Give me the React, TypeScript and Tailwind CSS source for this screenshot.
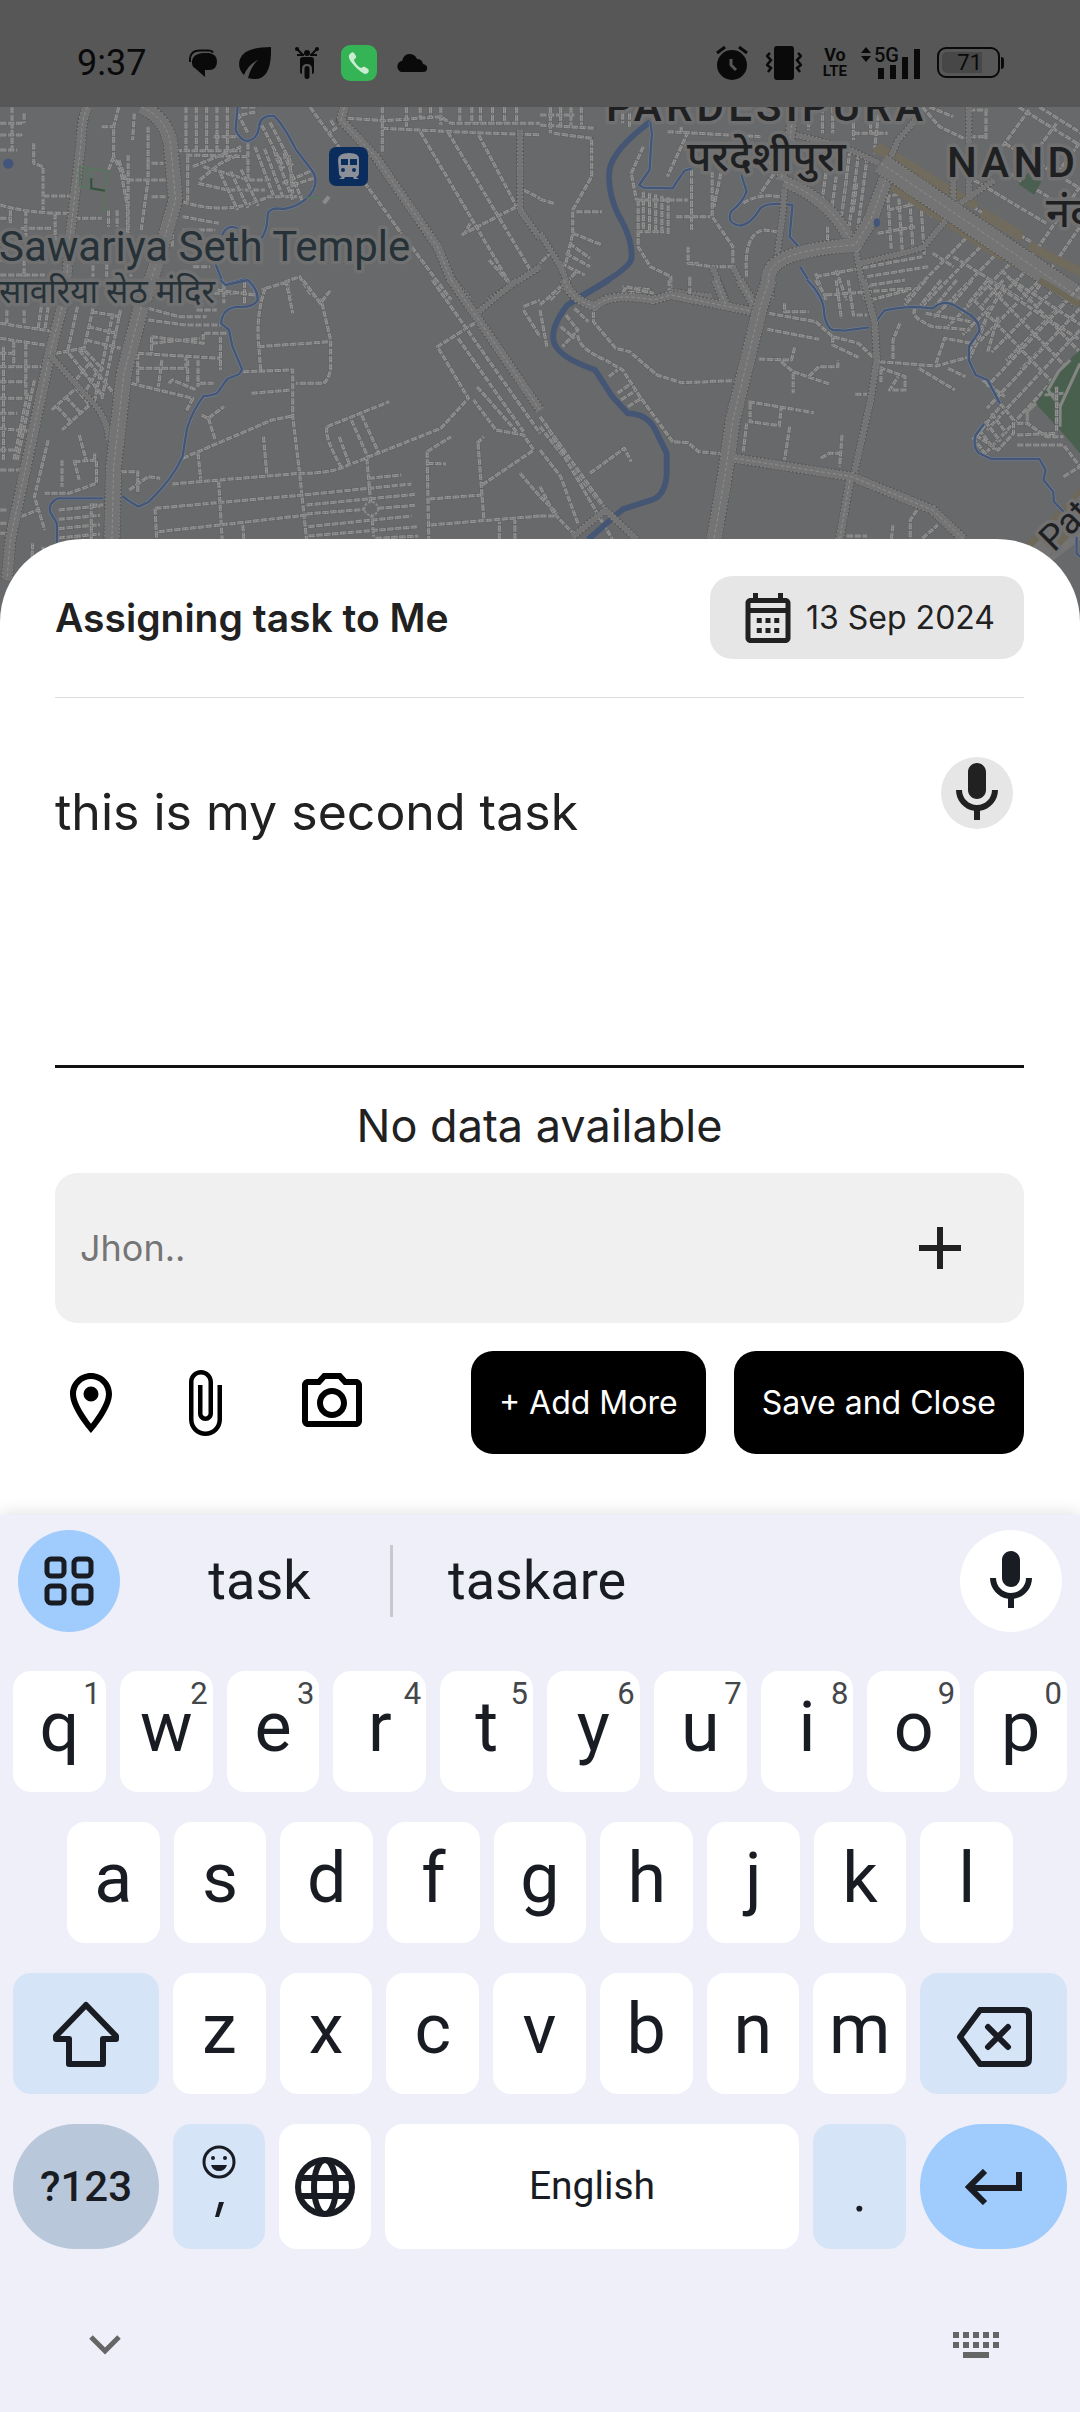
import React from "react";

/* ---------- map drawing ---------- */

/** n parallel streets starting at (x, y), each (dx, dy) long and stepped by (sx, sy). */
function rows(x: number, y: number, dx: number, dy: number, n: number, sx: number, sy: number) {
  let d = "";
  for (let i = 0; i < n; i++) d += `M${x + sx * i} ${y + sy * i}l${dx} ${dy}`;
  return d;
}

function Street({ d }: { d: string }) {
  return (
    <g fill="none" strokeLinejoin="round">
      <path d={d} stroke="#5f6062" strokeWidth={12} />
      <path d={d} stroke="#949494" strokeWidth={9} strokeDasharray="19 4" />
      <path d={d} stroke="#717171" strokeWidth={3} strokeDasharray="5 3" />
    </g>
  );
}

function Road({ d, w }: { d: string; w: number }) {
  return (
    <g fill="none" strokeLinejoin="round">
      <path d={d} stroke="#545556" strokeWidth={w + 7} strokeDasharray="8 4" />
      <path d={d} stroke="#8c8c8c" strokeWidth={w + 3} strokeDasharray="6 5" />
      <path d={d} stroke="#747474" strokeWidth={w - 1} />
      {w > 17 && <path d={d} stroke="#9a9a9a" strokeWidth={2} strokeDasharray="10 7" />}
    </g>
  );
}

function Stream({ d, w = 7 }: { d: string; w?: number }) {
  return (
    <g fill="none" strokeLinejoin="round">
      {w < 10 && <path d={d} stroke="#74849d" strokeWidth={w + 3} />}
      <path d={d} stroke="#455674" strokeWidth={w} />
    </g>
  );
}

function MapLabel({ x, y, size, children, color = "#1e2022", className = "", rotate = 0 }: {
  x: number; y: number; size: number; children: string; color?: string; className?: string; rotate?: number;
}) {
  return (
    <text
      x={x}
      y={y}
      fontSize={size}
      fill={color}
      stroke="#717171"
      strokeWidth={7}
      strokeLinejoin="round"
      paintOrder="stroke"
      transform={rotate ? `rotate(${rotate} ${x} ${y})` : undefined}
      className={`font-[Roboto,'Noto_Sans',sans-serif] ${className}`}
    >
      {children}
    </text>
  );
}

function CityMap() {
  return (
    <svg viewBox="0 107 1080 515" preserveAspectRatio="xMidYMin slice" className="h-full w-full bg-[#68696b]" role="img" aria-label="Map">
      {/* north-west */}
      <g transform="scale(.3444 .3333)">
        <Street d={"M0 370H70M0 405H70M0 450H50M35 321V450M70 340V370M98 430V490L125 500V630M125 588H215M0 615Q80 640 200 640M75 630V710M0 655H35M30 630V670M160 640V740M60 685H150M215 655H295M0 780H60M70 780V830M0 825H130M345 321L330 380V470L350 510L370 620V740M295 380H335M390 340L385 420M430 380V490M372 465V700M330 470L315 510M345 480L365 540M370 540H490M440 490H475M440 590H480M430 490V540L410 690M315 630V680M340 630V680"} />
        <Street d={rows(540, 321, 0, 130, 5, 30, 0) + "M510 452H700M540 465L720 470M545 470V610M620 410H690V400M560 500L700 440M720 430V540M580 540L640 490L690 465M530 605Q660 650 780 590H880M575 550L660 570H770M590 500L720 540H790M530 650L635 670M530 690H625M500 740V700"} />
        <Street d={rows(760, 375, 65, 130, 2, 24, -8) + rows(740, 440, 55, 150, 4, 28, 6) + rows(640, 520, 50, 110, 3, 30, -6) + "M690 340L720 400M700 321L745 321M700 345L745 335M800 480L840 470L850 580M820 550L910 510M850 555L910 535"} />
        <Street d="M900 321L1165 700M1195 740L1310 900M1010 355L1120 362L1280 350L1310 370H1568M1110 321V460M960 360L975 385L955 400M1180 321V380M1220 321V355M1250 321V355M1280 321V375M1335 321V370M1370 321V370M1395 321V370M1430 321V370M1465 321V370M1500 321V370M1110 385L1380 398L1568 404" />
        <Street d="M1220 395L1480 850M1300 395L1540 810M1390 405L1500 620M1340 705L1500 620M1365 670L1350 700M1520 570L1568 595M1420 780L1480 850M760 870L870 830L900 880L930 900M835 850L845 900M960 870L940 900M620 880H740M270 795V830M310 790V830M560 800H610M380 800V830" />
        <Road w={24} d="M255 321Q238 345 235 430L200 740L190 900" />
        <Road w={38} d="M410 321Q480 350 495 430L510 600L470 740L420 900" />
        <Road w={22} d="M1000 321L990 360L1090 470L1270 740L1310 840L1360 900" />
        <Road w={15} d="M1510 390V630L1568 715" />
        <Road w={15} d="M1568 800L1420 900" />
        <Stream d="M690 321L684 390Q700 425 720 423Q750 415 752 380Q755 345 795 348Q820 370 860 450L905 510Q930 545 900 585Q870 620 825 627Q775 620 777 650Q775 700 755 720M645 705Q660 670 690 685M625 790L650 855L710 838Q745 860 748 900" />
        <path d="M232 500L313 514L303 572L232 560ZM303 572V630H318M250 505V565M265 505V565M890 593H935" fill="none" stroke="#587560" strokeWidth={5} />
        <path d="M265 535V565L305 572" fill="none" stroke="#34513c" strokeWidth={6} />
        <path d="M955 590L940 610" stroke="#8b8b8b" strokeWidth={12} />
        <ellipse cx={24} cy={491} rx={15} ry={15} fill="#43557a" />
      </g>

      {/* north-east */}
      <g transform="translate(540) scale(.3444 .3333)">
        <Street d={rows(60, 321, 0, 55, 3, 30, 0) + "M0 345H100M0 375L160 385M40 400L150 415V530L95 630V700L75 790M0 598L40 610M105 635H180M95 700L180 735M85 730L145 775M75 760L145 800M60 790L130 825M35 755L0 790M30 900L110 810M200 340V370M240 340V370M260 340V380M30 321V400"} />
        <Street d={"M370 395L640 410M430 395L370 530M410 380V400M300 440L265 520L280 600M440 510V690M280 600H430M280 695H360M395 650H495M500 515V650L560 740V790M525 520L505 620M285 600V740L320 800L380 830V880M430 740V790H460M430 790L500 800H570M435 830V880M210 885L320 870L240 860" + rows(300, 575, 0, 115, 5, 18, 4)} />
        <Street d={"M620 500L700 480M590 610Q630 580 700 590M680 520L640 580M600 830Q590 700 650 690L690 695M835 680V730M820 321V400M780 340V390M850 321V400M910 321V420M960 321V400M910 400H1010M985 321L970 460" + rows(830, 520, -12, 90, 4, 30, 10) + rows(900, 450, -30, 240, 3, 25, 10)} />
        <Street d={rows(1010, 590, 10, 160, 4, 32, 6) + "M1010 630L1100 610M980 700L1090 680M1000 590L1060 580L1140 650M800 830L1110 770M800 820L830 900M860 810L890 900M950 830L1130 800M950 860L1060 840M1110 321L1160 380L1240 420M1130 321L1200 350M1290 410H1250M1295 330V420M1245 330H1300"} />
        <Street d={rows(1390, 321, 178, 115, 2, 60, 0) + rows(1350, 430, 210, 130, 4, -45, 55) + rows(1420, 330, -85, 120, 3, 80, 40) + rows(1568, 560, -160, 240, 2, 0, 120) + rows(1270, 680, -210, 220, 9, 42, 26) + "M1200 770L1400 900M1140 760L1200 800"} />
        <path d="M960 450L990 430L1050 465L1275 610L1260 630ZM1290 625L1405 695L1395 725L1275 650ZM1425 725L1568 800V830L1415 750ZM1020 545L1350 765L1340 785L1015 570Z" fill="#716b5d" />
        <path d="M1360 785L1568 900" stroke="#716b5d" strokeWidth={14} />
        <path d="M1418 518L1456 545L1434 584L1390 553Z" fill="#4a5f50" />
        <Stream w={17} d="M320 365Q210 450 202 510Q195 570 225 640Q272 720 265 780Q255 810 120 888" />
        <Stream d="M320 365L325 400L318 510L288 555L300 563L385 565Q400 540 420 512L440 506M585 525L600 575Q590 605 555 635Q540 670 580 677Q610 675 640 625Q660 605 733 615L725 710L755 745M755 800L815 900" />
        <Road w={26} d="M735 340L725 420L700 540" />
        <Road w={14} d="M710 560L705 640L688 770" />
        <Road w={14} d="M745 405L880 440L985 490M1090 360L1040 420L1015 480M1245 321V600M1200 540V600M915 740L945 900M930 790L1110 745L1220 610L1320 540M380 875L500 890M500 800L540 900M560 800L610 900M0 700L60 800L100 900" />
        <Road w={32} d="M710 545Q850 600 910 740" />
        <Road w={38} d="M1010 520L960 660L915 735Q700 750 670 810Q655 840 660 900" />
        <Road w={58} d="M990 490L1568 895" />
        <ellipse cx={978} cy={668} rx={9} ry={13} fill="#43557a" />
      </g>

      {/* south-west */}
      <g transform="translate(0 280) scale(.3444 .3333)">
        <Street d={"M0 130L160 155M0 175L130 195M0 220H40M0 260H120M0 305H75M0 355H70M0 400H50M0 445L90 455M0 510H40M0 570H70M20 90V130M70 90V130M40 185V260M75 190V350M10 200V540M0 690H20M0 760H25M0 730H30M120 80L110 150M140 80L130 150M100 300L50 540M80 340L40 540M140 480L100 650L130 750M60 710L110 690M90 900L95 790M120 900L125 800"} />
        <Street d={rows(225, 80, -30, 140, 2, 45, 5) + rows(350, 90, -55, 270, 2, -22, 10) + "M265 95L350 110M255 140L340 160M250 180L350 205M160 220L240 205L300 270M230 210L330 340M200 220L300 350M220 300L260 250M250 330L285 270M150 390L220 325L260 375L180 450M165 380L210 430M190 350L235 400"} />
        <Street d={"M430 85L520 110H600M430 120L540 135H640M400 220L640 235M440 170L590 190V160H660M440 170V220M400 265H540V230M380 310L560 355L540 395M490 310L500 300L570 330M575 240V320M545 240V310M580 310H620M640 170V270M470 240L460 320M400 220V310M630 30L740 45M570 90H630M440 190L580 175M650 10V70M710 5V70"} />
        <Street d="M770 25L840 5M770 25Q745 100 750 180L757 270M750 200L960 185M830 0L850 100M880 0L930 70L960 30M935 70L960 180V270Q950 310 935 310H860M705 275L850 270V410L870 580L890 778M730 340L845 330M530 535L790 420L850 408M585 405L605 415L650 380M605 415L625 480M575 520L583 600M765 470L775 585" />
        <Street d="M500 612L870 580Q960 580 1000 560L1280 445L1360 355L1270 200L1385 125M950 440L1130 365M950 440Q940 470 990 560M985 470L1015 555M1020 420L1070 535M1050 405L1098 515M1065 535L1085 770M1070 595L1165 585M450 685L880 645L1195 612M450 685L455 778M890 675L1205 643M890 702L1205 676M460 755L640 735L890 705M895 740L1195 708M895 768L1215 740M635 605L645 778M705 735L708 778M1090 775L1215 768" />
        <Street d={"M1240 515L1310 470M1240 515L1245 778M1240 550L1295 552M1385 490L1405 470M1388 490L1405 720M1400 615L1550 510L1520 465L1440 450L1375 360M1245 657L1400 645M1250 735L1568 708M1510 580L1568 650M1450 778V725M1495 778V720M1330 175L1520 455M1385 320L1500 455M1520 80L1568 60M1520 90L1568 170M1255 0L1568 460M350 575H400V640M375 630L430 590L465 595M230 465L250 540M215 545L280 540V610L200 640H130M180 540V620M215 540L230 600M275 520V540" + rows(170, 690, 120, -12, 4, 0, 28) + "M265 670V778M265 675H300"} />
        <circle cx={1078} cy={686} r={20} fill="#68696b" stroke="#8b8b8b" strokeWidth={6} strokeDasharray="8 4" />
        <Road w={28} d="M180 80L145 220L75 560L30 778L20 900" />
        <Road w={14} d="M145 225L280 380Q315 430 315 480" />
        <Road w={42} d="M410 80L360 280L330 560L325 778" />
        <Road w={22} d="M1310 0L1390 120L1568 390" />
        <Road w={14} d="M1390 95L1500 0" />
        <Stream d="M640 0L655 15L720 0Q750 30 748 60Q735 85 690 80Q645 85 642 130L665 150L675 200L703 268L695 282L660 297L630 340Q610 350 592 347Q560 390 543 445L530 530Q500 600 430 667L402 680L370 660L355 648M300 655H168Q140 670 145 695L165 730V790" />
      </g>

      {/* south-east */}
      <g transform="translate(540 280) scale(.3444 .3333)">
        <Street d={"M0 75L60 20M0 90L20 200M75 105L110 150L65 200M60 140L100 175M100 85L140 125M155 95V125L220 205L260 215L340 285L410 308L565 302M110 165Q110 205 190 240L240 270L290 350L385 485L430 488L460 515L540 522M200 290L225 270M225 340L265 310M235 360L280 330M255 380L295 355M145 580L245 505L265 545M0 510L60 590L110 730M0 620L40 700L100 765M0 708H50M0 650L50 700M240 40L250 20L330 40M375 0V35M435 0V45M0 440L190 690"} />
        <Street d="M0 410L200 700M15 430L210 778M665 100L800 125M710 70V95H780M660 148L810 178M635 237L730 240L740 200M700 245L735 275L840 312M780 290L810 260H865V240M735 280V340M605 365L795 398M610 370V425L695 437L700 385M600 430L590 515M725 440L710 540M877 465L870 560M815 535L840 520H870M915 343H950M800 125L850 170L925 190L970 235M850 170V195L925 232" />
        <Street d={"M1045 130L1025 180V240M985 245L1150 258L1250 230L1330 40M985 262L1060 290V330H1015L1040 290M1100 265L1205 330M1185 265L1235 290M1150 250L1175 175L1255 190M1090 85Q1070 110 1140 140L1250 150M1120 100L1250 125M990 265V310M800 0L830 50M860 0L875 115M895 0L910 105H950M830 45L1080 25M960 60L1070 30M960 15L1060 0"} />
        <Street d={rows(1120, 0, -60, 75, 6, 45, 0) + rows(1260, 60, 240, 260, 3, 40, -45) + rows(1568, 20, -270, 300, 4, 0, 65) + rows(1300, 0, 268, 180, 2, 70, 0) + "M1245 215L1350 10M1300 215L1330 110M1285 300L1350 350"} />
        <path d="M1568 210L1500 275L1440 372L1510 450L1568 520Z" fill="#49604f" />
        <path d="M1568 250L1510 380V440M1465 345L1520 340M1415 430V395L1440 370M1540 240L1505 275L1475 330L1510 380" fill="none" stroke="#858683" strokeWidth={9} />
        <Street d={rows(1310, 400, 45, 60, 4, -18, 24) + "M1265 470L1340 375L1375 420V460L1330 510L1265 465M1385 430H1415L1470 470H1520M1385 465L1500 460M1385 495H1520L1568 560M1520 590L1568 560M1500 320V460M1025 735L1020 778M1095 690L1075 720V778M1110 775L1155 735M890 768H950"} />
        <path d="M1420 800L1568 640L1568 780L1480 850Z" fill="#747474" />
        <path d="M1410 790L1568 625L1568 655L1430 800ZM1530 720L1568 690V740L1480 830Z" fill="#6e6859" />
        <path d="M1450 0L1568 75" stroke="#6e6859" strokeWidth={18} />
        <Stream w={17} d="M200 0L80 75Q30 140 40 185Q50 230 160 270L210 350L255 400Q310 400 335 450L368 520V580Q365 640 330 658L240 688L140 778" />
        <Stream d="M775 0Q825 50 825 100Q830 140 850 150L885 152L955 142M975 125L1000 92Q1060 75 1140 85Q1175 55 1210 80L1250 105Q1280 130 1275 155L1245 200V240L1265 285L1300 300L1335 370M1290 430L1265 465Q1255 500 1275 520L1310 537H1450L1468 570L1462 600L1490 635L1492 665L1520 695M1558 770V820L1568 830" />
        <Road w={22} d="M70 0Q90 60 160 80Q200 35 330 60L380 45L620 95M510 0L540 75M580 0L625 80" />
        <Road w={40} d="M665 0L640 80L560 420L535 600L505 778" />
        <Road w={16} d="M940 0L972 130L978 240L960 360L910 590" />
        <Road w={24} d="M565 535L905 590L1140 690L1230 778" />
        <Road w={20} d="M900 600L870 778" />
        <Road w={16} d="M95 770L190 690L280 778" />
      </g>

      <MapLabel x={-1} y={261} size={42} color="#263238">Sawariya Seth Temple</MapLabel>
      <MapLabel x={-1} y={303} size={33} color="#263238">सावरिया सेठ मंदिर</MapLabel>
      <MapLabel x={606} y={121} size={42} className="font-medium tracking-widest">PARDESIPURA</MapLabel>
      <MapLabel x={687} y={171} size={42} className="font-medium">परदेशीपुरा</MapLabel>
      <MapLabel x={947} y={177} size={42} className="font-medium tracking-widest">NAND</MapLabel>
      <MapLabel x={1046} y={227} size={42} className="font-medium">नंद</MapLabel>
      <MapLabel x={1054} y={553} size={36} rotate={-45}>Patn</MapLabel>

      <rect x={329} y={147} width={39} height={39} rx={7} fill="#0b2d5e" />
      <g fill="#8a8f98">
        <path d="M338 160q0-7 11-7t10 7v13q0 3-3 4l3 2h-5l-1-2h-8l-1 2h-5l3-2q-3-1-3-4z" />
        <path d="M341 159h7v6h-7zM350 159h7v6h-7z" fill="#0b2d5e" />
        <circle cx={343} cy={170} r={2} fill="#0b2d5e" />
        <circle cx={354} cy={170} r={2} fill="#0b2d5e" />
      </g>
    </svg>
  );
}

/* ---------- icons ---------- */

function Icon({ d, className }: { d: string; className: string }) {
  return (
    <svg viewBox="0 0 24 24" fill="currentColor" className={className} aria-hidden="true">
      <path d={d} />
    </svg>
  );
}

const MIC = "M12 14c1.66 0 3-1.34 3-3V5c0-1.66-1.34-3-3-3S9 3.340 9 5v6c0 1.660 1.340 3 3 3zm5-3c0 2.760-2.240 5-5 5s-5-2.240-5-5H5c0 3.530 2.610 6.430 6 6.920V21h2v-3.080c3.390-.49 6-3.390 6-6.920h-2z";
const PLUS = "M19 13h-6v6h-2v-6H5v-2h6V5h2v6h6v2z";
const PIN = "M12 2C8.130 2 5 5.130 5 9c0 5.250 7 13 7 13s7-7.750 7-13c0-3.870-3.130-7-7-7zM7 9c0-2.760 2.240-5 5-5s5 2.240 5 5c0 2.880-2.880 7.190-5 9.880C9.920 16.210 7 11.850 7 9zM12 6.500a2.500 2.500 0 1 0 0 5 2.500 2.500 0 0 0 0-5z";
const CLIP = "M16.500 6v11.500c0 2.210-1.790 4-4 4s-4-1.790-4-4V5c0-1.380 1.120-2.500 2.500-2.500s2.500 1.120 2.500 2.500v10.500c0 .55-.45 1-1 1s-1-.45-1-1V6H10v9.500c0 1.380 1.120 2.500 2.500 2.500s2.500-1.120 2.500-2.500V5c0-2.210-1.790-4-4-4S7 2.790 7 5v12.500c0 3.040 2.460 5.500 5.500 5.500s5.500-2.460 5.500-5.500V6h-1.500z";
const CAMERA = "M20 4h-3.170L15 2H9L7.170 4H4c-1.100 0-2 .9-2 2v12c0 1.100.9 2 2 2h16c1.100 0 2-.9 2-2V6c0-1.100-.9-2-2-2zm0 14H4V6h4.050l1.830-2h4.240l1.830 2H20v12zM12 7c-2.760 0-5 2.240-5 5s2.240 5 5 5 5-2.240 5-5-2.240-5-5-5zm0 8c-1.650 0-3-1.350-3-3s1.350-3 3-3 3 1.350 3 3-1.350 3-3 3z";
const CALENDAR = "M19 4h-1V2h-2v2H8V2H6v2H5c-1.110 0-1.990.9-1.990 2L3 20c0 1.100.89 2 2 2h14c1.100 0 2-.9 2-2V6c0-1.100-.9-2-2-2zm0 16H5V10h14v10zm0-12H5V6h14v2zM7.500 12h2v2h-2zM11 12h2v2h-2zM14.500 12h2v2h-2zM7.500 16h2v2h-2zM11 16h2v2h-2zM14.500 16h2v2h-2z";

/* ---------- status bar ---------- */

function StatusBar() {
  return (
    <header className="flex h-[107px] items-center justify-between bg-[#575757] pr-[76px] pl-[77px] pt-[18px] text-[#0a0a0a]">
      <div className="flex items-center">
        <span className="w-[112px] font-[Roboto,sans-serif] text-[36px] leading-none">9:37</span>
        <svg viewBox="0 0 28 28" className="mr-[22px] size-[28px]" fill="currentColor" aria-hidden="true">
          <path d="M13 4h7q8 1 8 8.500 0 8.500-8 8.500h-4v7l-9-8Q2 17 3 12q1-7 10-8z" />
          <path d="M1 13Q0 1.500 11 1.500h8q4 0 5 2" fill="none" stroke="currentColor" strokeWidth={2} />
        </svg>
        <svg viewBox="0 0 32 34" className="mr-[24px] h-[34px] w-[32px]" fill="currentColor" aria-hidden="true">
          <path d="M32 1Q33 33 16 33q-4 0-7-1Q12 20 19 14 9 19 5 29-2 22 1 13 5 1 32 1z" />
        </svg>
        <svg viewBox="0 0 24 34" className="mr-[22px] h-[34px] w-[24px]" fill="currentColor" aria-hidden="true">
          <circle cx={2} cy={3} r={2} />
          <circle cx={22} cy={3} r={2} />
          <circle cx={12} cy={7} r={3} />
          <path d="M2 3l6 6M22 3l-6 6M2 9h7M22 9h-7" stroke="currentColor" strokeWidth={2} />
          <path d="M5 14q0-3 3-3h8q3 0 3 3v12q0 2-2 2v-5q0-5-5-5t-5 5v5q-2 0-2-2z" />
          <rect x={9.500} y={20} width={5} height={13} rx={2.500} />
        </svg>
        <svg viewBox="0 0 36 36" className="mr-[18px] size-[36px]" aria-hidden="true">
          <rect width={36} height={36} rx={9} fill="#35b455" />
          <path d="M10 8c-3 2-3 5 1 10s10 10 13 11c3 0 5-3 3-5l-3-2c-2-1-3 1-4 1-3-1-6-5-7-8 0-1 3-2 2-4l-2-3c-1-1-2-1-3 0z" fill="#c9ecd2" />
        </svg>
        <svg viewBox="0 0 33 20" className="h-[20px] w-[33px]" fill="currentColor" aria-hidden="true">
          <path d="M6 19a6 6 0 0 1 0-11h1Q9 1 14 1q6 0 8 5 5 0 6 5 5 1 4 5 0 3-4 3z" />
        </svg>
      </div>
      <div className="flex items-center">
        <svg viewBox="0 0 32 34" className="mr-[18px] h-[34px] w-[32px]" aria-hidden="true">
          <circle cx={16} cy={19} r={15} fill="currentColor" />
          <path d="M1 7l8-6M31 7l-8-6" stroke="currentColor" strokeWidth={3} />
          <path d="M15 13v6l5 5" fill="none" stroke="#575757" strokeWidth={3} />
        </svg>
        <svg viewBox="0 0 36 34" className="mr-[21px] h-[34px] w-[36px]" aria-hidden="true">
          <rect x={8} width={20} height={34} rx={3} fill="currentColor" />
          <path d="M4 7L1 10l4 4-4 5 4 3-3 4M32 7l3 3-4 4 4 5-4 3 3 4" fill="none" stroke="currentColor" strokeWidth={2.500} />
        </svg>
        <span className="mr-[13px] flex flex-col items-center font-[Roboto,sans-serif] text-[18px] leading-4 font-bold">
          <span>Vo</span>
          <span className="text-[15px]">LTE</span>
        </span>
        <div className="relative mr-[15px] h-[32px] w-[62px]">
          <svg viewBox="0 0 62 32" className="h-[32px] w-[62px]" fill="currentColor" aria-hidden="true">
            <path d="M6 0l5 6H1zM6 15l5-6H1z" />
            <path d="M18 21h6v11h-6zM30 18h6v14h-6zM42 10h6v22h-6zM54 2h6v30h-6z" />
          </svg>
          <span className="absolute -top-[2px] left-[14px] font-[Roboto,sans-serif] text-[20px] leading-5 font-medium">5G</span>
        </div>
        <div className="flex items-center">
          <div className="flex h-[31px] w-[63px] rounded-[9px] border-2 border-current p-[3px]">
            <span className="flex w-[40px] items-center justify-end rounded-l-[5px] bg-[#474747] font-[Roboto,sans-serif] text-[22px] leading-none">71</span>
          </div>
          <span className="ml-px h-[12px] w-[3px] rounded-r bg-current" />
        </div>
      </div>
    </header>
  );
}

/* ---------- task sheet ---------- */

function TaskSheet() {
  return (
    <form className="relative -mt-[83px] flex flex-col rounded-t-[83px] bg-white pr-[56px] pl-[55px] pt-[37px] pb-[61px] text-[#212121]" onSubmit={(e) => e.preventDefault()}>
      <div className="flex items-center justify-between border-b border-[#dcdcdc] pb-[38px]">
        <h1 className="text-[39px] leading-none font-semibold">Assigning task to Me</h1>
        <button type="button" className="flex h-[83px] items-center rounded-[22px] bg-[#e6e6e6] pr-[29px] pl-[28px] text-[32px]">
          <Icon d={CALENDAR} className="mr-[8px] size-[60px]" />
          13 Sep 2024
        </button>
      </div>

      <div className="mt-[59px] flex h-[311px] items-start border-b-[3px] border-[#111111]">
        <textarea
          aria-label="Task"
          defaultValue="this is my second task"
          className="mt-[19px] h-[240px] min-w-0 flex-1 resize-none bg-transparent text-[50px] leading-[72px] outline-none"
        />
        <button type="button" aria-label="Dictate task" className="mr-[11px] rounded-full bg-[#e6e6e6]">
          <Icon d={MIC} className="size-[72px]" />
        </button>
      </div>

      <p className="mt-[28px] text-center text-[45px] leading-[60px]">No data available</p>

      <div className="mt-[17px] flex h-[150px] items-center rounded-[22px] bg-[#f0f0f0] pr-[48px] pl-[25px]">
        <input
          type="text"
          aria-label="Assignee"
          placeholder="Jhon.."
          className="min-w-0 flex-1 bg-transparent text-[36px] outline-none placeholder:text-[#757575] placeholder:opacity-100"
        />
        <button type="button" aria-label="Add assignee">
          <Icon d={PLUS} className="size-[72px]" />
        </button>
      </div>

      <div className="mt-[28px] flex items-center text-black">
        <button type="button" aria-label="Location"><Icon d={PIN} className="size-[72px]" /></button>
        <button type="button" aria-label="Attachment" className="ml-[41px]"><Icon d={CLIP} className="size-[72px]" /></button>
        <button type="button" aria-label="Camera" className="ml-[56px]"><Icon d={CAMERA} className="size-[72px]" /></button>
        <button type="button" className="ml-auto h-[103px] rounded-[22px] bg-black px-[28px] text-[32px] text-white">+ Add More</button>
        <button type="submit" className="ml-[28px] h-[103px] rounded-[22px] bg-black px-[28px] text-[32px] text-white">Save and Close</button>
      </div>
    </form>
  );
}

/* ---------- keyboard ---------- */

function Key({ label, hint }: { label: string; hint?: string }) {
  return (
    <button type="button" className="relative flex h-[121px] min-w-0 flex-1 items-center justify-center rounded-[18px] bg-white text-[70px] leading-none">
      <span className="-mt-[10px]">{label}</span>
      {hint && <span className="absolute top-[7px] right-[5px] text-[31px] leading-none text-[#44474a]">{hint}</span>}
    </button>
  );
}

function Keyboard() {
  return (
    <section aria-label="Keyboard" className="relative flex flex-1 flex-col bg-[#eeeff8] font-[Roboto,sans-serif] text-[#191c22] shadow-[0_-2px_16px_rgba(0,0,0,0.12)]">
      <div className="flex items-center px-[18px] pt-[15px]">
        <button type="button" aria-label="Keyboard tools" className="flex size-[102px] items-center justify-center rounded-full bg-[#9fcbfd]">
          <svg viewBox="0 0 50 50" className="size-[50px]" fill="none" stroke="currentColor" strokeWidth={5} aria-hidden="true">
            <rect x={3} y={3} width={17} height={17} rx={4} />
            <rect x={30} y={3} width={17} height={17} rx={4} />
            <rect x={3} y={30} width={17} height={17} rx={4} />
            <rect x={30} y={30} width={17} height={17} rx={4} />
          </svg>
        </button>
        <button type="button" className="ml-[9px] w-[261px] text-center text-[54px] leading-[72px]">task</button>
        <span className="h-[72px] w-[3px] bg-[#c8c9ce]" />
        <button type="button" className="ml-[55px] text-[54px] leading-[72px]">taskare</button>
        <button type="button" aria-label="Voice typing" className="ml-auto flex size-[102px] items-center justify-center rounded-full bg-white">
          <Icon d={MIC} className="size-[72px]" />
        </button>
      </div>

      <div className="mt-[39px] flex flex-col gap-[30px] px-[13px]">
        <div className="flex gap-[14px]">
          {"qwertyuiop".split("").map((k, i) => (
            <Key key={k} label={k} hint={String((i + 1) % 10)} />
          ))}
        </div>
        <div className="flex gap-[14px] px-[54px]">
          {"asdfghjkl".split("").map((k) => (
            <Key key={k} label={k} />
          ))}
        </div>
        <div className="flex gap-[14px]">
          <button type="button" aria-label="Shift" className="flex w-[146px] items-center justify-center rounded-[18px] bg-[#d6e4f7]">
            <svg viewBox="0 0 68 66" className="h-[66px] w-[68px]" fill="none" stroke="currentColor" strokeWidth={6} strokeLinejoin="round" aria-hidden="true">
              <path d="M34 4L4 35v3h13v25h34V38h13v-3z" />
            </svg>
          </button>
          {"zxcvbnm".split("").map((k) => (
            <Key key={k} label={k} />
          ))}
          <button type="button" aria-label="Backspace" className="flex w-[147px] items-center justify-center rounded-[18px] bg-[#d6e4f7]">
            <svg viewBox="0 0 76 60" className="mt-[6px] h-[60px] w-[76px]" fill="none" stroke="currentColor" strokeWidth={6} strokeLinejoin="round" aria-hidden="true">
              <path d="M24 3h44q5 0 5 5v44q0 5-5 5H24L4 30z" />
              <path d="M32 20l20 20M52 20L32 40" strokeLinecap="round" />
            </svg>
          </button>
        </div>
        <div className="flex h-[125px] gap-[14px]">
          <button type="button" className="w-[146px] rounded-full bg-[#b8c7da] text-[42px] font-medium">?123</button>
          <button type="button" aria-label="Comma and emoji" className="flex w-[92px] flex-col items-center rounded-[18px] bg-[#d6e4f7] pt-[21px]">
            <svg viewBox="0 0 34 34" className="size-[34px]" fill="none" stroke="currentColor" strokeWidth={3} aria-hidden="true">
              <circle cx={17} cy={17} r={15} />
              <circle cx={11} cy={13} r={2} fill="currentColor" stroke="none" />
              <circle cx={23} cy={13} r={2} fill="currentColor" stroke="none" />
              <path d="M9 20h16q-2 6-8 6t-8-6z" fill="currentColor" stroke="none" />
            </svg>
            <svg viewBox="0 0 10 15" className="mt-[23px] h-[15px] w-[10px]" fill="currentColor" aria-hidden="true">
              <path d="M5 0h5L5 15H1z" />
            </svg>
          </button>
          <button type="button" aria-label="Change language" className="flex w-[92px] items-center justify-center rounded-[18px] bg-white">
            <svg viewBox="0 0 60 60" className="size-[60px]" fill="none" stroke="currentColor" strokeWidth={6} aria-hidden="true">
              <circle cx={30} cy={30} r={27} />
              <ellipse cx={30} cy={30} rx={11} ry={27} />
              <path d="M4 21h52M4 39h52" />
            </svg>
          </button>
          <button type="button" className="flex-1 rounded-[18px] bg-white text-[39px]">English</button>
          <button type="button" aria-label="Period" className="w-[93px] rounded-[18px] bg-[#d6e4f7] pt-[12px] text-[54px] leading-none">.</button>
          <button type="button" aria-label="Enter" className="flex w-[147px] items-center justify-center rounded-full bg-[#9fcbfd]">
            <svg viewBox="0 0 58 36" className="h-[36px] w-[58px]" fill="none" stroke="currentColor" strokeWidth={6} aria-hidden="true">
              <path d="M54 3v16H5M20 2L4 18l16 16" />
            </svg>
          </button>
        </div>
      </div>

      <div className="mt-[82px] flex h-[28px] items-center justify-between pr-[81px] pl-[89px] text-[#666666]">
        <button type="button" aria-label="Hide keyboard">
          <svg viewBox="0 0 32 20" className="h-[20px] w-[32px]" fill="none" stroke="currentColor" strokeWidth={5} aria-hidden="true">
            <path d="M2 2l14 14L30 2" />
          </svg>
        </button>
        <button type="button" aria-label="Switch keyboard">
          <svg viewBox="0 0 46 26" className="h-[26px] w-[46px]" fill="currentColor" aria-hidden="true">
            <path d="M0 0h6v6H0zM10 0h6v6h-6zM20 0h6v6h-6zM30 0h6v6h-6zM40 0h6v6h-6zM0 10h6v6H0zM10 10h6v6h-6zM20 10h6v6h-6zM30 10h6v6h-6zM40 10h6v6h-6zM10 20h26v6H10z" />
          </svg>
        </button>
      </div>
    </section>
  );
}

export default function App() {
  return (
    <main className="flex min-h-screen flex-col overflow-hidden bg-white font-[Inter,'Noto_Sans',sans-serif]">
      <StatusBar />
      <div className="h-[515px]">
        <CityMap />
      </div>
      <TaskSheet />
      <Keyboard />
    </main>
  );
}
